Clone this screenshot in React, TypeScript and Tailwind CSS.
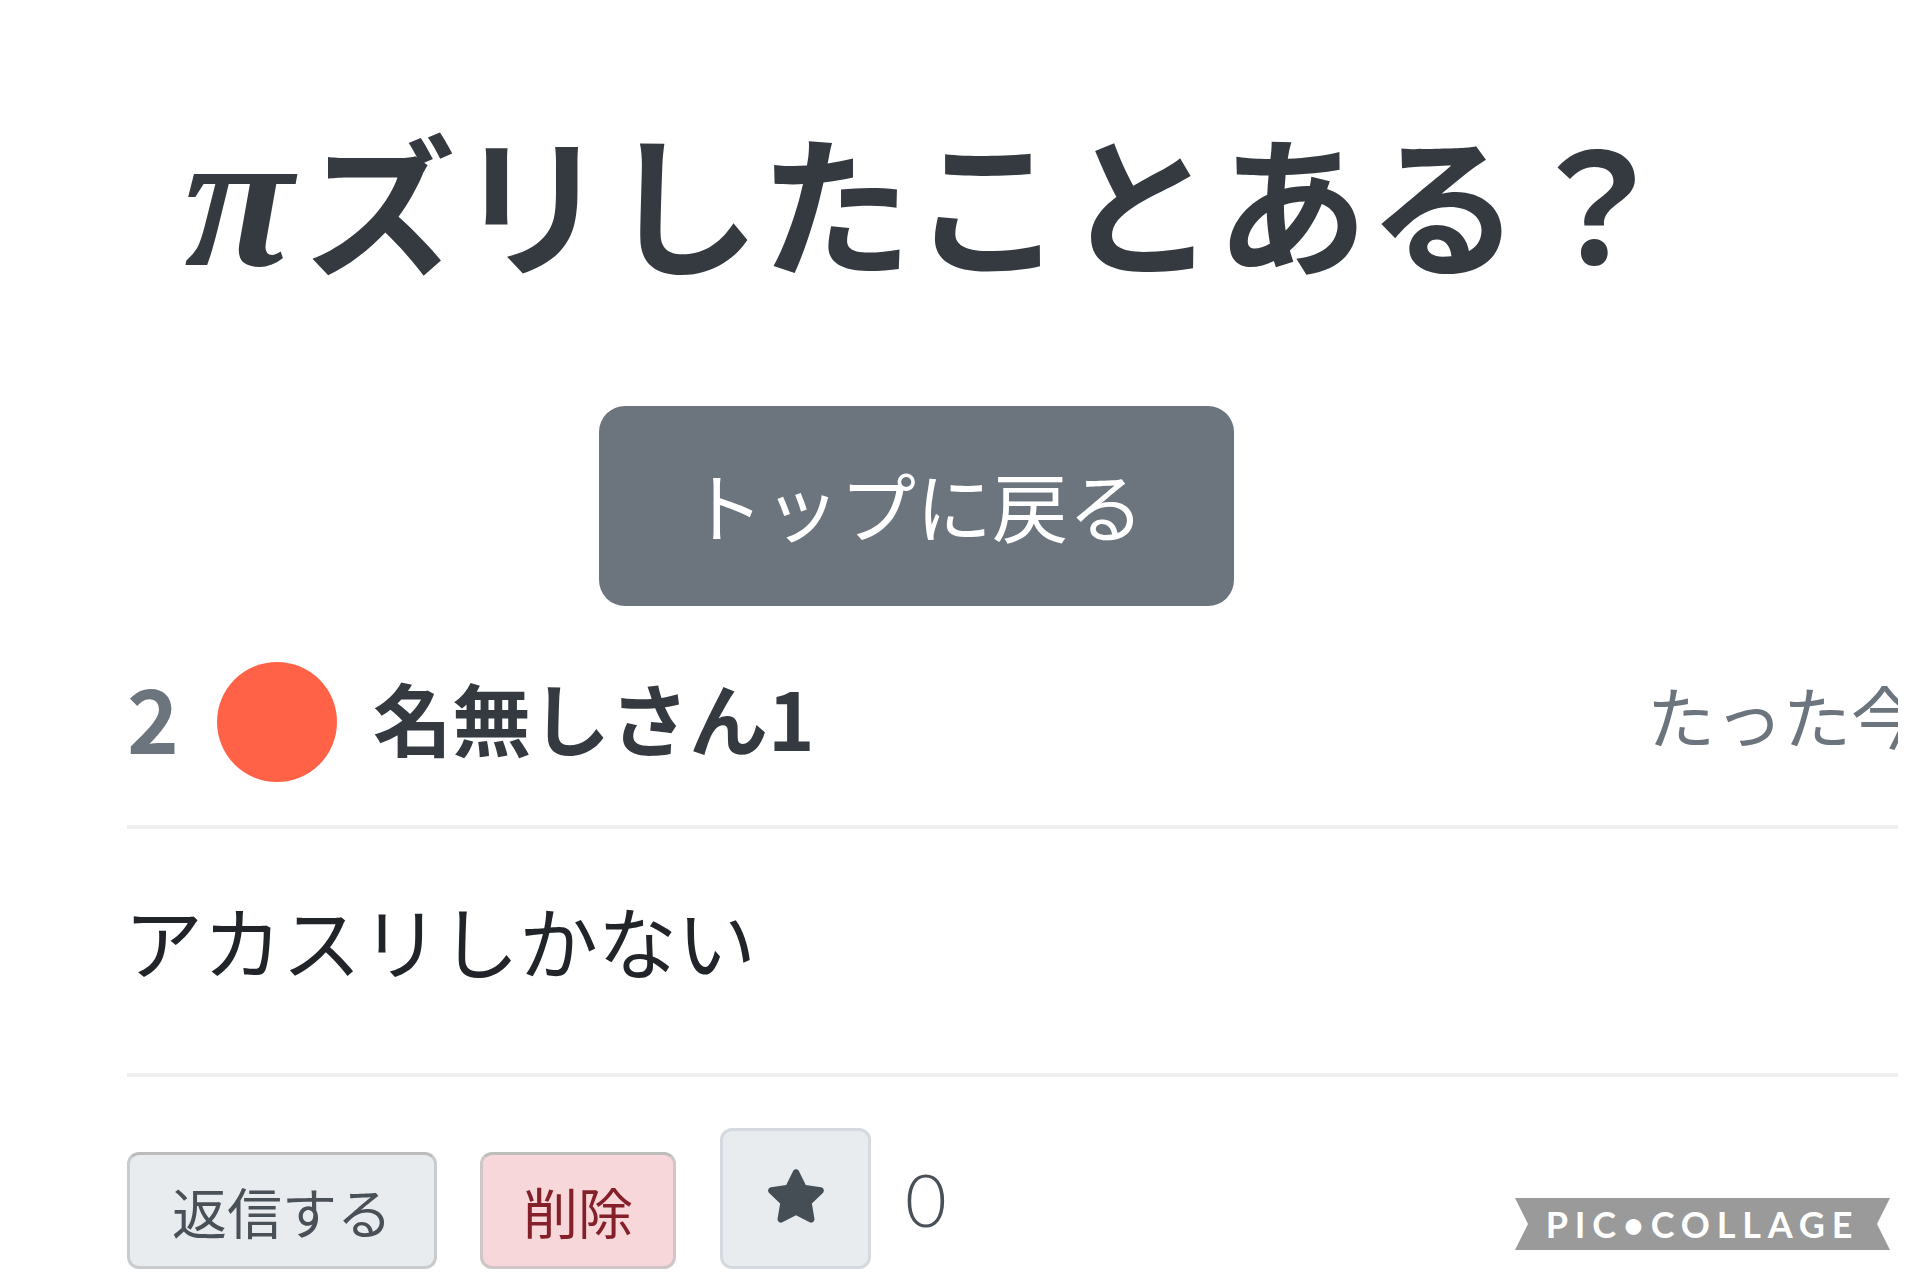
import React from 'react';
import { FaStar } from 'react-icons/fa';

const JP = { fontFamily: '"Noto Sans CJK JP", "Noto Sans", sans-serif' };

const ReplyActions = () => (
  <div className="flex items-end pt-[51px]">
    <button className="h-[117px] px-[42px] rounded-[12px] border-[3px] border-[#c9cbcd] border-t-[#bcbcbc] bg-[#e9ecef] text-[55px] leading-none text-[#495057]">
      返信する
    </button>
    <button className="ml-[43px] h-[117px] px-[40px] rounded-[12px] border-[3px] border-[#cfc6c7] border-t-[#bdbdbd] bg-[#f8d7da] text-[55px] leading-none text-[#842029]">
      削除
    </button>
    <button className="ml-[44px] h-[141px] w-[151px] flex items-center justify-center pb-[6px] rounded-[12px] border-[3px] border-[#d5dae0] bg-[#e9ecef] text-[#454d55]">
      <FaStar size={60} />
    </button>
    <span
      className="ml-[34px] self-center text-[72px] leading-none font-light text-[#495057]"
      style={{ fontFamily: 'Lato, "Open Sans", sans-serif' }}
    >
      0
    </span>
  </div>
);

export default function App() {
  return (
    <div className="relative w-[1920px] h-[1280px] bg-white overflow-hidden" style={JP}>
      <div className="w-[1898px] h-full overflow-hidden">
        {/* thread title + back button */}
        <div className="w-[1832px] flex flex-col items-center pt-[123px]">
          <h1 className="self-start ml-[184px] h-[153px] text-[152px] leading-none font-bold text-[#343a40] whitespace-nowrap">
            <span
              className="inline-block w-[120px] italic text-[200px] leading-[0.5]"
              style={{ fontFamily: '"Liberation Serif", serif' }}
            >
              π
            </span>
            ズリしたことある？
          </h1>
          <button className="mt-[130px] w-[635px] h-[200px] flex items-center justify-center pb-[4px] rounded-[26px] bg-[#6c757d] text-white text-[76px] leading-none">
            トップに戻る
          </button>
        </div>

        {/* post */}
        <div className="ml-[127px] w-[1792px] mt-[56px]">
          <div className="flex items-center pb-[43px] border-b-4 border-[#efefef]">
            <span className="pb-[12px] text-[88px] leading-none font-bold text-[#6c757d]">2</span>
            <span className="ml-[38px] w-[120px] h-[120px] rounded-full bg-[#ff6246] shrink-0" />
            <span className="ml-[36px] pb-[12px] text-[79px] leading-none font-bold text-[#343a40] whitespace-nowrap">
              名無しさん1
            </span>
            <span className="ml-auto pb-[14px] text-[68px] leading-none text-[#6c757d] whitespace-nowrap">たった今</span>
          </div>
          <div className="pt-[71px] pb-[94px] border-b-4 border-[#efefef]">
            <p className="-ml-[3px] text-[79px] leading-none text-[#212529]">アカスリしかない</p>
          </div>
          <ReplyActions />
        </div>
      </div>

      {/* watermark */}
      <div className="absolute left-[1515px] top-[1198px] w-[375px] h-[52px] bg-[#9a9a9a] flex items-center justify-center [clip-path:polygon(0_0,100%_0,calc(100%-13px)_50%,100%_100%,0_100%,13px_50%)]">
        <span className="text-white text-[36px] font-bold tracking-[0.19em] leading-none" style={{ fontFamily: 'Lato, "Open Sans", sans-serif' }}>
          PIC•COLLAGE
        </span>
      </div>
    </div>
  );
}
